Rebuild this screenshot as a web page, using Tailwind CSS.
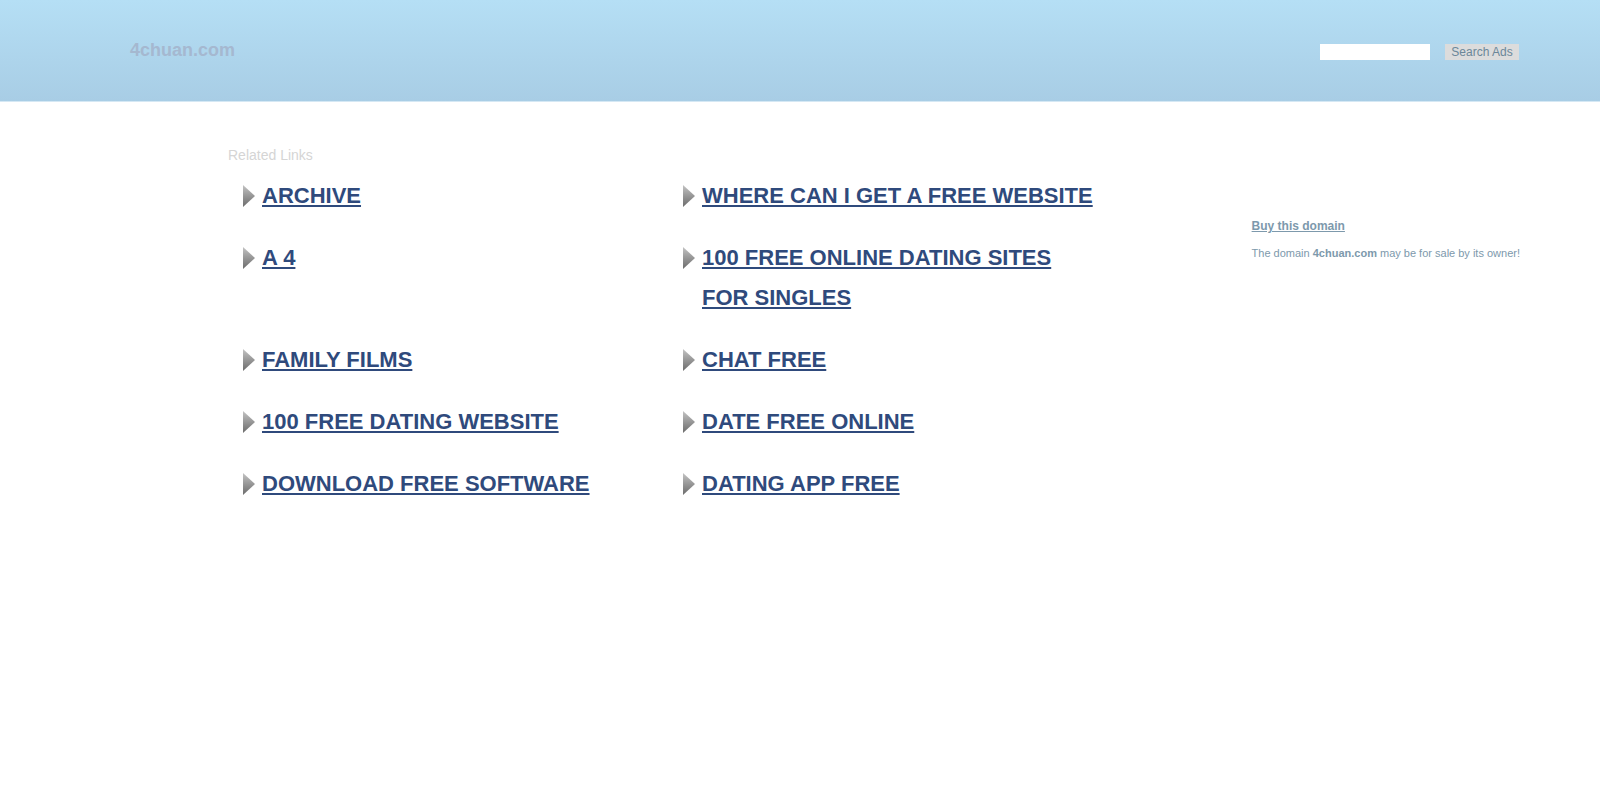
<!DOCTYPE html>
<html lang="en">
<head>
<meta charset="utf-8">
<meta name="viewport" content="width=device-width, initial-scale=1">
<title>4chuan.com</title>
<script src="https://cdn.jsdelivr.net/npm/@tailwindcss/browser@4"></script>
</head>
<body class="bg-white font-['Liberation_Sans',Arial,sans-serif]">
<header class="flex items-center justify-between border-b border-[#d5e8f4] bg-linear-to-b from-[#b5dff5] to-[#a8cde5] pt-[38px] pr-[81px] pb-[39px] pl-[130px]">
  <h1 class="text-[18px] leading-6 font-bold text-[#a5b8d0]">4chuan.com</h1>
  <form class="flex items-center gap-[15px] pt-1">
    <input type="text" aria-label="Search Ads" class="h-4 w-[110px] bg-white px-1 text-xs outline-none">
    <button type="submit" class="h-4 w-[74px] bg-[#dcdcdc] text-center text-[12px] leading-4 text-[#6b8799]">Search Ads</button>
  </form>
</header>
<main class="flex justify-between gap-32 pr-20 pl-[228px]">
  <section class="flex-1 pt-[45px]">
    <h2 class="text-[14px] leading-4 text-[#d5d5d5]">Related Links</h2>
    <ul class="mt-[13px] grid max-w-[895px] grid-cols-2 gap-y-[22px] pl-[15px] text-[22px] leading-[40px] font-bold text-[#2f4a7c]">
      <li class="flex items-start gap-[7px] pr-5"><span class="mt-[9px] h-[22px] w-3 shrink-0 bg-linear-to-b from-[#c4c4c4] to-[#6c6c6c] [clip-path:polygon(0_0,100%_50%,0_100%)]"></span><a href="#" class="underline">ARCHIVE</a></li>
      <li class="flex items-start gap-[7px] pr-5"><span class="mt-[9px] h-[22px] w-3 shrink-0 bg-linear-to-b from-[#c4c4c4] to-[#6c6c6c] [clip-path:polygon(0_0,100%_50%,0_100%)]"></span><a href="#" class="underline">WHERE CAN I GET A FREE WEBSITE</a></li>
      <li class="flex items-start gap-[7px] pr-5"><span class="mt-[9px] h-[22px] w-3 shrink-0 bg-linear-to-b from-[#c4c4c4] to-[#6c6c6c] [clip-path:polygon(0_0,100%_50%,0_100%)]"></span><a href="#" class="underline">A 4</a></li>
      <li class="flex items-start gap-[7px] pr-5"><span class="mt-[9px] h-[22px] w-3 shrink-0 bg-linear-to-b from-[#c4c4c4] to-[#6c6c6c] [clip-path:polygon(0_0,100%_50%,0_100%)]"></span><a href="#" class="underline">100 FREE ONLINE DATING SITES FOR SINGLES</a></li>
      <li class="flex items-start gap-[7px] pr-5"><span class="mt-[9px] h-[22px] w-3 shrink-0 bg-linear-to-b from-[#c4c4c4] to-[#6c6c6c] [clip-path:polygon(0_0,100%_50%,0_100%)]"></span><a href="#" class="underline">FAMILY FILMS</a></li>
      <li class="flex items-start gap-[7px] pr-5"><span class="mt-[9px] h-[22px] w-3 shrink-0 bg-linear-to-b from-[#c4c4c4] to-[#6c6c6c] [clip-path:polygon(0_0,100%_50%,0_100%)]"></span><a href="#" class="underline">CHAT FREE</a></li>
      <li class="flex items-start gap-[7px] pr-5"><span class="mt-[9px] h-[22px] w-3 shrink-0 bg-linear-to-b from-[#c4c4c4] to-[#6c6c6c] [clip-path:polygon(0_0,100%_50%,0_100%)]"></span><a href="#" class="underline">100 FREE DATING WEBSITE</a></li>
      <li class="flex items-start gap-[7px] pr-5"><span class="mt-[9px] h-[22px] w-3 shrink-0 bg-linear-to-b from-[#c4c4c4] to-[#6c6c6c] [clip-path:polygon(0_0,100%_50%,0_100%)]"></span><a href="#" class="underline">DATE FREE ONLINE</a></li>
      <li class="flex items-start gap-[7px] pr-5"><span class="mt-[9px] h-[22px] w-3 shrink-0 bg-linear-to-b from-[#c4c4c4] to-[#6c6c6c] [clip-path:polygon(0_0,100%_50%,0_100%)]"></span><a href="#" class="underline">DOWNLOAD FREE SOFTWARE</a></li>
      <li class="flex items-start gap-[7px] pr-5"><span class="mt-[9px] h-[22px] w-3 shrink-0 bg-linear-to-b from-[#c4c4c4] to-[#6c6c6c] [clip-path:polygon(0_0,100%_50%,0_100%)]"></span><a href="#" class="underline">DATING APP FREE</a></li>
    </ul>
  </section>
  <aside class="pt-[116px] text-[#7d99ac]">
    <a href="#" class="block text-[12px] leading-4 font-bold underline">Buy this domain</a>
    <p class="mt-[11px] text-[11px] leading-4 whitespace-nowrap">The domain <b>4chuan.com</b> may be for sale by its owner!</p>
  </aside>
</main>
</body>
</html>
